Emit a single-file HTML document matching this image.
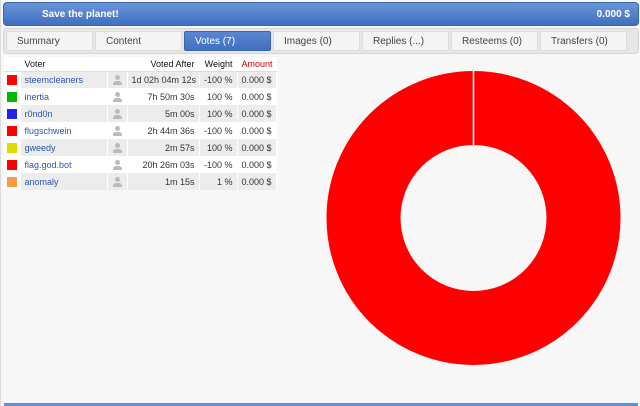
<!DOCTYPE html>
<html><head><style>
*{margin:0;padding:0;box-sizing:border-box}
body{width:640px;height:406px;background:#f7f7f7;font-family:"Liberation Sans",sans-serif;position:relative;overflow:hidden;border-left:1px solid #ddd}
.hdr{position:absolute;left:2px;top:2px;width:636px;height:24px;border-radius:4px;background:linear-gradient(#6a95d9,#3f6fc0);border:1px solid #3a64ad;color:#fff;font-size:10px;font-weight:bold}
.hdr .t{position:absolute;left:38px;top:6px}
.hdr .a{position:absolute;right:8px;top:6px}
.tabs{position:absolute;left:2px;top:28px;width:636px;height:26px;background:#e6e6e6;border-radius:3px;border:1px solid #d6d6d6}
.tab{position:absolute;top:2px;width:87px;height:20px;background:#f4f4f4;border:1px solid #dcdcdc;border-radius:2px;font-size:10px;color:#444;padding:4px 0 0 10px}
.tab.on{background:linear-gradient(#5b87d2,#3f6fc0);color:#fff;border-color:#3a64ad}
table{position:absolute;left:3px;top:57px;width:272px;border-collapse:collapse;font-size:9px;color:#333;background:#fff;table-layout:fixed}
td,th{height:17px;padding:0 4px;white-space:nowrap;border-right:1px solid #fff}
th{height:14px;font-weight:normal;color:#111;border-bottom:1px solid #ddd}
tr.g td{background:#ececec}
td.c{padding:0 0 0 3px;background:#fff!important}
.sq{width:10px;height:10px}
a{color:#2a55b0;text-decoration:none}
.r{text-align:right}
.ic{width:10px;height:10px;position:relative}
.ic:before{content:"";position:absolute;left:3px;top:0;width:5px;height:5px;border-radius:50%;background:#b7bcc2}
.ic:after{content:"";position:absolute;left:1px;top:6px;width:9px;height:4px;border-radius:3px 3px 0 0;background:#b7bcc2}
.bot{position:absolute;left:3px;top:403px;width:634px;height:3px;background:#5f8fd8}
</style></head><body>
<div class="hdr"><span class="t">Save the planet!</span><span class="a">0.000 $</span></div>
<div class="tabs">
<div class="tab" style="left:2px">Summary</div>
<div class="tab" style="left:91px">Content</div>
<div class="tab on" style="left:180px">Votes (7)</div>
<div class="tab" style="left:269px">Images (0)</div>
<div class="tab" style="left:358px">Replies (...)</div>
<div class="tab" style="left:447px">Resteems (0)</div>
<div class="tab" style="left:536px">Transfers (0)</div>
</div>
<table>
<colgroup><col style="width:16px"><col style="width:87px"><col style="width:20px"><col style="width:72px"><col style="width:38px"><col style="width:39px"></colgroup>
<tr><th></th><th style="text-align:left">Voter</th><th></th><th class="r">Voted After</th><th class="r">Weight</th><th class="r" style="color:#c00">Amount</th></tr>
<tr class="g"><td class="c"><div class="sq" style="background:#f00"></div></td><td><a>steemcleaners</a></td><td><div class="ic"></div></td><td class="r">1d 02h 04m 12s</td><td class="r">-100 %</td><td class="r">0.000 $</td></tr>
<tr><td class="c"><div class="sq" style="background:#0b0"></div></td><td><a>inertia</a></td><td><div class="ic"></div></td><td class="r">7h 50m 30s</td><td class="r">100 %</td><td class="r">0.000 $</td></tr>
<tr class="g"><td class="c"><div class="sq" style="background:#22e"></div></td><td><a>r0nd0n</a></td><td><div class="ic"></div></td><td class="r">5m 00s</td><td class="r">100 %</td><td class="r">0.000 $</td></tr>
<tr><td class="c"><div class="sq" style="background:#f00"></div></td><td><a>flugschwein</a></td><td><div class="ic"></div></td><td class="r">2h 44m 36s</td><td class="r">-100 %</td><td class="r">0.000 $</td></tr>
<tr class="g"><td class="c"><div class="sq" style="background:#dd0"></div></td><td><a>gweedy</a></td><td><div class="ic"></div></td><td class="r">2m 57s</td><td class="r">100 %</td><td class="r">0.000 $</td></tr>
<tr><td class="c"><div class="sq" style="background:#f00"></div></td><td><a>flag.god.bot</a></td><td><div class="ic"></div></td><td class="r">20h 26m 03s</td><td class="r">-100 %</td><td class="r">0.000 $</td></tr>
<tr class="g"><td class="c"><div class="sq" style="background:#f94"></div></td><td><a>anomaly</a></td><td><div class="ic"></div></td><td class="r">1m 15s</td><td class="r">1 %</td><td class="r">0.000 $</td></tr>
</table>
<svg style="position:absolute;left:0;top:0" width="640" height="406">
<circle cx="472.5" cy="218" r="110" fill="none" stroke="#f00" stroke-width="74"/>
<line x1="472.5" y1="70" x2="472.5" y2="146" stroke="#fff" stroke-width="1.5"/>
</svg>
<div class="bot"></div>
</body></html>
